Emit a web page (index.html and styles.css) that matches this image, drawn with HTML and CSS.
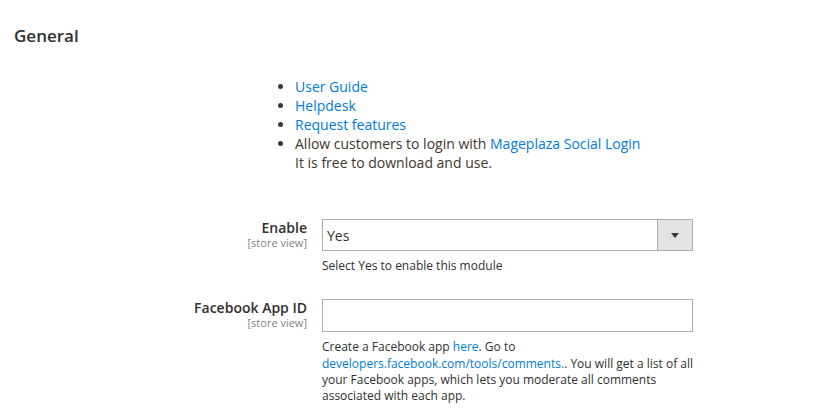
FILE: index.html
```html
<!DOCTYPE html>
<html>
<head>
<meta charset="utf-8">
<link rel="stylesheet" href="styles.css">
</head>
<body>
<div class="page">
  <h2 class="section-title">General</h2>
  <ul class="intro">
    <li><a href="#">User Guide</a></li>
    <li><a href="#">Helpdesk</a></li>
    <li><a href="#">Request features</a></li>
    <li>Allow customers to login with <a href="#">Mageplaza Social Login</a><br>It is free to download and use.</li>
  </ul>
  <div class="field field-enable">
    <div class="label">
      <span class="label-text">Enable</span>
      <span class="scope">[store view]</span>
    </div>
    <div class="control">
      <div class="select">
        <span class="select-value">Yes</span>
        <span class="select-btn"><span class="arrow"></span></span>
      </div>
      <div class="note">Select Yes to enable this module</div>
    </div>
  </div>
  <div class="field field-appid">
    <div class="label">
      <span class="label-text">Facebook App ID</span>
      <span class="scope">[store view]</span>
    </div>
    <div class="control">
      <div class="input"></div>
      <div class="note">Create a Facebook app <a href="#">here</a>. Go to <a href="#">developers.facebook.com/tools/comments.</a>. You will get a list of all your Facebook apps, which lets you moderate all comments associated with each app.</div>
    </div>
  </div>
</div>
</body>
</html>
```

FILE: styles.css
```css
html, body {
  margin: 0;
  padding: 0;
  background: #ffffff;
}
body {
  font-family: "Open Sans", "Noto Sans", sans-serif;
  color: #41362f;
  font-size: 14px;
  line-height: 19px;
}
a {
  color: #007bdb;
  text-decoration: none;
}
.section-title {
  margin: 0;
  padding: 25px 14px 0 14px;
  font-size: 17px;
  font-weight: 600;
  line-height: 22px;
  color: #303030;
}
.intro {
  margin: 30px 0 0 0;
  padding: 0 0 0 295px;
  list-style: disc;
}
.intro li {
  margin: 0;
}
.field {
  display: grid;
  grid-template-columns: 307px 371px;
  column-gap: 15px;
}
.field-enable {
  margin-top: 47px;
}
.field-appid {
  margin-top: 25px;
}
.label {
  display: flex;
  flex-direction: column;
  align-items: flex-end;
  color: #303030;
}
.label-text {
  font-size: 14px;
  font-weight: 600;
  line-height: 17px;
}
.scope {
  font-size: 11px;
  line-height: 13px;
  color: #808080;
}
.select {
  height: 32px;
  box-sizing: border-box;
  border: 1px solid #adadad;
  display: flex;
  align-items: center;
  background: #fff;
}
.select-value {
  flex: 1;
  padding-left: 4px;
  font-size: 14px;
  color: #303030;
}
.select-btn {
  width: 34px;
  align-self: stretch;
  background: #e3e3e3;
  border-left: 1px solid #adadad;
  display: flex;
  align-items: center;
  justify-content: center;
}
.arrow {
  width: 0;
  height: 0;
  border-left: 4px solid transparent;
  border-right: 4px solid transparent;
  border-top: 5px solid #41362f;
}
.input {
  height: 33px;
  box-sizing: border-box;
  border: 1px solid #adadad;
  background: #fff;
}
.note {
  margin-top: 7px;
  font-size: 12px;
  line-height: 16.3px;
  color: #303030;
}
```
